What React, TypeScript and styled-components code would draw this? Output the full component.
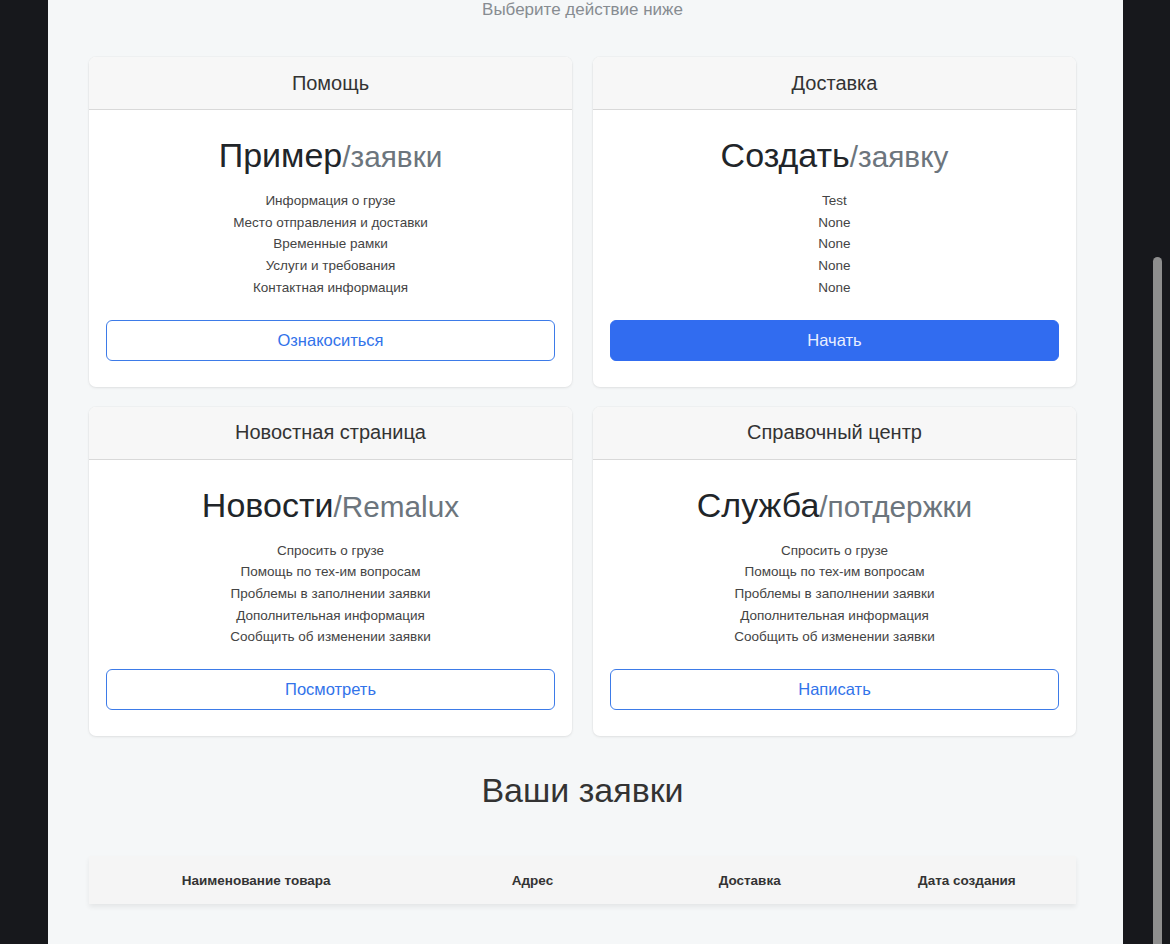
import React from "react";
import styled, { createGlobalStyle } from "styled-components";

const GlobalStyle = createGlobalStyle`
    html, body {
        margin: 0;
        padding: 0;
        background: #17181c;
        font-family: "Liberation Sans", Arial, sans-serif;
        color: #212529;
    }
    * { box-sizing: border-box; }
`;

interface Plan {
    header: string;
    main: string;
    sub: string;
    items: string[];
    action: string;
    primary?: boolean;
}

const plans: Plan[] = [
    {
        header: "Помощь",
        main: "Пример",
        sub: "заявки",
        items: [
            "Информация о грузе",
            "Место отправления и доставки",
            "Временные рамки",
            "Услуги и требования",
            "Контактная информация",
        ],
        action: "Ознакоситься",
    },
    {
        header: "Доставка",
        main: "Создать",
        sub: "заявку",
        items: ["Test", "None", "None", "None", "None"],
        action: "Начать",
        primary: true,
    },
    {
        header: "Новостная страница",
        main: "Новости",
        sub: "Remalux",
        items: [
            "Спросить о грузе",
            "Помощь по тех-им вопросам",
            "Проблемы в заполнении заявки",
            "Дополнительная информация",
            "Сообщить об изменении заявки",
        ],
        action: "Посмотреть",
    },
    {
        header: "Справочный центр",
        main: "Служба",
        sub: "потдержки",
        items: [
            "Спросить о грузе",
            "Помощь по тех-им вопросам",
            "Проблемы в заполнении заявки",
            "Дополнительная информация",
            "Сообщить об изменении заявки",
        ],
        action: "Написать",
    },
];

const columns = [
    { title: "Наименование товара", width: 334 },
    { title: "Адрес", width: 218 },
    { title: "Доставка", width: 216 },
    { title: "Дата создания", width: 218 },
];

/* ------------------------------ Styled UI ------------------------------- */
const Screen = styled.div`
    display: flex;
    min-height: 944px;
`;

const SideGutter = styled.div`
    width: 48px;
    flex-shrink: 0;
    background: #17181c;
`;

const ScrollTrack = styled.div`
    width: 48px;
    flex-shrink: 0;
    background: #17181c;
    display: flex;
    flex-direction: column;
    align-items: flex-start;
    padding: 257px 0 0 30px;
`;

const ScrollThumb = styled.div`
    width: 9px;
    flex: 1;
    background: #8e8e8e;
    border-radius: 5px 5px 0 0;
`;

const Page = styled.main`
    flex: 1;
    background: #f5f7f8;
    padding: 0 47px 0 41px;
    display: flex;
    flex-direction: column;
    align-items: stretch;
`;

const Lead = styled.p`
    margin: 0;
    text-align: center;
    font-size: 17px;
    line-height: 20px;
    color: #878c91;
`;

const CardGrid = styled.div`
    margin-top: 37px;
    display: grid;
    grid-template-columns: 483px 483px;
    column-gap: 21px;
    row-gap: 20px;
`;

const Card = styled.section`
    background: #fff;
    border-radius: 7px;
    box-shadow: 0 1px 3px rgba(0, 0, 0, 0.08), 0 0 0 1px rgba(0, 0, 0, 0.02);
    overflow: hidden;
    display: flex;
    flex-direction: column;
`;

const CardHeader = styled.header`
    height: 53px;
    flex-shrink: 0;
    background: #f7f7f7;
    border-bottom: 1px solid #d9d9d9;
    display: flex;
    align-items: center;
    justify-content: center;
    font-size: 20px;
    color: #333;
`;

const CardBody = styled.div`
    padding: 25px 17px 26px;
    display: flex;
    flex-direction: column;
    align-items: stretch;
    text-align: center;
`;

const PlanTitle = styled.h2`
    margin: 0;
    font-size: 34px;
    font-weight: 400;
    line-height: 40px;
    color: #212529;

    small {
        font-size: 0.875em;
        color: #6c757d;
    }
`;

const FeatureList = styled.ul`
    list-style: none;
    margin: 13px 0 0;
    padding: 0;
    font-size: 13.5px;
    line-height: 21.7px;
    color: #444;
`;

const ActionBtn = styled.button<{ $primary?: boolean }>`
    margin-top: 21px;
    height: 41px;
    width: 100%;
    border-radius: 6px;
    font-family: inherit;
    font-size: 16.5px;
    cursor: pointer;
    border: 1px solid ${({ $primary }) => ($primary ? "#316cf0" : "#3d7be8")};
    background: ${({ $primary }) => ($primary ? "#316cf0" : "#fff")};
    color: ${({ $primary }) => ($primary ? "#e9efff" : "#3273ea")};
`;

const SectionTitle = styled.h2`
    margin: 34px 0 0;
    text-align: center;
    font-size: 34px;
    font-weight: 400;
    line-height: 40px;
    color: #333;
`;

const OrdersTable = styled.table`
    margin-top: 46px;
    width: 100%;
    border-collapse: collapse;
    table-layout: fixed;
    box-shadow: 0 3px 5px rgba(0, 0, 0, 0.07);

    th {
        background: #f5f5f5;
        height: 48px;
        padding: 1px 0 0;
        font-size: 13.5px;
        font-weight: 700;
        color: #333;
        text-align: center;
    }
`;

const PlanCard: React.FC<{ plan: Plan }> = ({ plan }) => (
    <Card>
        <CardHeader>{plan.header}</CardHeader>
        <CardBody>
            <PlanTitle>
                {plan.main}
                <small>/{plan.sub}</small>
            </PlanTitle>
            <FeatureList>
                {plan.items.map((item, i) => (
                    <li key={i}>{item}</li>
                ))}
            </FeatureList>
            <ActionBtn $primary={plan.primary}>{plan.action}</ActionBtn>
        </CardBody>
    </Card>
);

export default function App() {
    return (
        <>
            <GlobalStyle />
            <Screen>
                <SideGutter />
                <Page>
                    <Lead>Выберите действие ниже</Lead>
                    <CardGrid>
                        {plans.map(p => (
                            <PlanCard key={p.header} plan={p} />
                        ))}
                    </CardGrid>
                    <SectionTitle>Ваши заявки</SectionTitle>
                    <OrdersTable>
                        <colgroup>
                            {columns.map(c => (
                                <col key={c.title} style={{ width: c.width }} />
                            ))}
                        </colgroup>
                        <thead>
                            <tr>
                                {columns.map(c => (
                                    <th key={c.title}>{c.title}</th>
                                ))}
                            </tr>
                        </thead>
                    </OrdersTable>
                </Page>
                <ScrollTrack>
                    <ScrollThumb />
                </ScrollTrack>
            </Screen>
        </>
    );
}
